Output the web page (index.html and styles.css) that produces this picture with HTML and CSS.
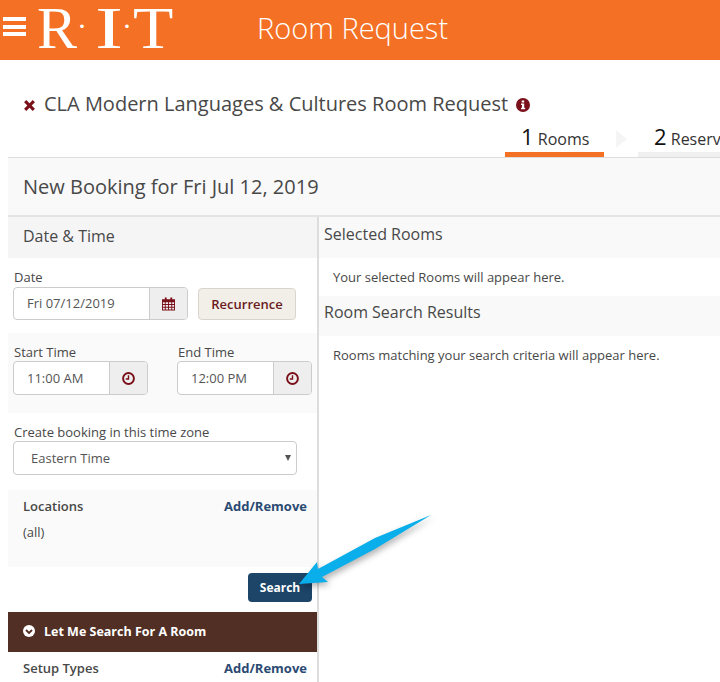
FILE: index.html
```html
<!DOCTYPE html>
<html>
	<head>
		<meta http-equiv="Content-Type" content="text/html; charset=utf-8"/>
		<title>Room Request</title>
		<link rel="stylesheet" href="styles.css">
	</head>
	<body>
	<div class="topbar">
		<div class="burger"><span></span><span></span><span></span></div>
		<div class="logo"><span class="ltr">R</span><span class="dot">·</span><span class="ltr ltrI">I</span><span class="dot">·</span><span class="ltr ltrT">T</span></div>
		<div class="appName">Room Request</div>
	</div>
	<div class="page">
		<div class="titleRow">
			<svg class="icoX" viewBox="0 0 12 12"><path d="M1 3 3 1 6 4 9 1 11 3 8 6 11 9 9 11 6 8 3 11 1 9 4 6Z"/></svg>
			<span class="titleText">CLA Modern Languages &amp; Cultures Room Request</span>
			<svg class="icoInfo" viewBox="0 0 14 14"><circle cx="7" cy="7" r="7"/><path fill="#fff" d="M5.7 2.4h2.5v2H5.700zM5 5.500h3.200v4.200h1v1.600H5V9.700h1V7.100H5z"/></svg>
		</div>
		<div class="steps">
			<div class="step on"><b>1</b> Rooms</div>
			<svg class="stepArrow" viewBox="0 0 11 18"><path d="M0 0 11 9 0 18Z"/></svg>
			<div class="step stepNext"><b>2</b> Reservation Details</div>
		</div>
		<div class="bookingHead">New Booking for Fri Jul 12, 2019</div>
		<div class="cols">
			<div class="leftCol">
				<div class="secHead">Date &amp; Time</div>
				<div class="dateBlock">
					<label>Date</label>
					<div class="dateRow">
						<div class="inputGroup dateInput">
							<span class="val">Fri 07/12/2019</span>
							<span class="addon">
								<svg class="icoCal" viewBox="0 0 14 14"><path fill-rule="evenodd" d="M3 0h2v2h4V0h2v2h3v12H0V2h3zM1 5v2h2V5zm3 0v2h2.500V5zm3.500 0v2H10V5zM11 5v2h2V5zM1 8v2h2V8zm3 0v2h2.500V8zm3.500 0v2H10V8zM11 8v2h2V8zM1 11v2h2v-2zm3 0v2h2.500v-2zm3.500 0v2H10v-2zm3.500 0v2h2v-2z"/></svg>
							</span>
						</div>
						<button class="btnRecur" type="button">Recurrence</button>
					</div>
				</div>
				<div class="timeBlock">
					<div class="timeField">
						<label>Start Time</label>
						<div class="inputGroup timeInput">
							<span class="val">11:00 AM</span>
							<span class="addon"><svg class="icoClock" viewBox="0 0 12 12"><circle cx="6" cy="6" r="5" fill="none" stroke-width="1.800"/><path d="M6 3v3.500H3.500" fill="none" stroke-width="1.300"/></svg></span>
						</div>
					</div>
					<div class="timeField">
						<label>End Time</label>
						<div class="inputGroup timeInput">
							<span class="val">12:00 PM</span>
							<span class="addon"><svg class="icoClock" viewBox="0 0 12 12"><circle cx="6" cy="6" r="5" fill="none" stroke-width="1.800"/><path d="M6 3v3.500H3.500" fill="none" stroke-width="1.300"/></svg></span>
						</div>
					</div>
				</div>
				<div class="zoneBlock">
					<label>Create booking in this time zone</label>
					<div class="selectBox"><span>Eastern Time</span><i class="caret"></i></div>
				</div>
				<div class="locBlock">
					<div class="rowHead"><strong>Locations</strong><a href="#">Add/Remove</a></div>
					<div class="allText">(all)</div>
				</div>
				<div class="searchRow"><button class="btnSearch" type="button">Search</button></div>
				<div class="brownBar">
					<svg class="icoDown" viewBox="0 0 12 12"><circle cx="6" cy="6" r="6" fill="#fff"/><path d="M3 5 6 8 9 5" fill="none" stroke="#512f25" stroke-width="1.800"/></svg>
					Let Me Search For A Room
				</div>
				<div class="rowHead setupRow"><strong>Setup Types</strong><a href="#">Add/Remove</a></div>
			</div>
			<div class="rightCol">
				<div class="resHead">Selected Rooms</div>
				<div class="resText">Your selected Rooms will appear here.</div>
				<div class="resHead resHead2">Room Search Results</div>
				<div class="resText">Rooms matching your search criteria will appear here.</div>
			</div>
		</div>
	</div>
	<svg class="callout" width="720" height="682" viewBox="0 0 720 682"><path d="M431 515 375 538 318 569 317 562 299 584 328 582 322 577 375 549Z"/></svg>
	</body>
</html>
```

FILE: styles.css
```css
html,body{margin:0; padding:0; height:682px; overflow:hidden; background:#fff;}
body{font-family:"Open Sans","Noto Sans",sans-serif; font-size:13px; color:#484848; position:relative;}
label{display:block; line-height:18px; padding-left:1px;}

.topbar{height:60px; background:#f47024; display:flex; align-items:center; color:#fff;}
.burger{width:23px; margin-left:3px; margin-top:-7px; display:flex; flex-direction:column; gap:3.500px;}
.burger span{display:block; height:4px; background:#fff;}
.logo{font-family:"Liberation Serif",serif; font-size:60px; line-height:56px; height:56px; align-self:flex-start; margin-left:11px; width:220px; display:flex; color:#fff;}
.ltr{display:block;}
.ltrI{width:26px; margin-left:9px; text-align:center; transform:scaleX(1.4);}
.ltrT{margin-left:1px; transform:scaleX(1.1); transform-origin:left center;}
.dot{font-size:30px; line-height:51px; width:10px; text-align:center;}
.appName{font-size:29px; font-weight:300; margin-top:-6px;}

.page{padding-left:8px; width:712px; overflow:hidden;}
.titleRow{height:50px; padding:19px 0 0 15px; display:flex; align-items:center;}
.icoX{width:13px; height:13px; fill:#7a1019; margin-top:3px;}
.titleText{font-size:20px; margin-left:8px; white-space:nowrap; line-height:30px;}
.icoInfo{width:14px; height:14px; fill:#7a1019; margin-left:8px; margin-top:1px;}

.steps{height:29px; display:flex; margin-top:-1px; padding-left:497px; white-space:nowrap;}
.step{flex:none; font-size:16px; height:24px; padding:0 0 0 16px; line-height:17px; border-bottom:5px solid #f0f0f0; color:#333; width:83px;}
.step b{font-size:22px; font-weight:400; color:#111;}
.step.on{border-bottom-color:#f47024;}
.stepNext{width:200px;}
.stepArrow{width:11px; height:18px; fill:#f5f5f5; margin:2px 11px 0 12px; flex:none;}

.bookingHead{height:57px; line-height:57px; padding-left:15px; font-size:20px; background:#f9f9f9; border-top:1px solid #ddd; border-bottom:2px solid #e4e4e4;}

.cols{display:flex;}
.leftCol{width:309px; height:465px; flex:none; border-right:2px solid #ddd;}
.secHead{height:41px; line-height:38px; padding-left:15px; font-size:16px; background:#f5f5f5;}
.dateBlock{height:75px; padding:10px 0 0 5px; box-sizing:border-box;}
.dateRow{display:flex; align-items:flex-end; gap:10px; margin-top:1px;}

.inputGroup{display:flex; height:34px; box-sizing:border-box; border:1px solid #ccc; border-radius:4px; background:#fff; overflow:hidden;}
.val{flex:1; line-height:32px; padding-left:13px; color:#555;}
.addon{width:37px; flex:none; background:#eee; border-left:1px solid #ccc; display:flex; align-items:center; justify-content:center;}
.dateInput{width:175px; height:33px;}
.dateInput .val{line-height:31px;}
.timeInput{width:135px;}
.icoCal{width:13px; height:14px; fill:#7a1019;}
.icoClock{width:13px; height:13px; stroke:#7a1019;}

.btnRecur{width:98px; height:32px; padding:0; font:600 13px "Open Sans",sans-serif; color:#6b1a1e; background:#f2efe9; border:1px solid #d8d5cf; border-radius:4px;}

.timeBlock{height:80px; background:#fafafa; padding:10px 0 0 5px; box-sizing:border-box; display:flex; gap:29px;}
.zoneBlock{height:77px; padding:10px 0 0 5px; box-sizing:border-box;}
.selectBox{width:284px; height:34px; box-sizing:border-box; border:1px solid #ccc; border-radius:4px; padding-left:17px; line-height:32px; position:relative; color:#555;}
.caret{position:absolute; right:5px; top:13px; border-left:3px solid transparent; border-right:3px solid transparent; border-top:6px solid #555;}

.locBlock{height:77px; background:#fafafa; padding:6px 10px 0 15px; box-sizing:border-box;}
.rowHead{display:flex; justify-content:space-between; line-height:20px;}
.rowHead strong{font-weight:600;}
.rowHead a{font-weight:700; color:#2b4a73; text-decoration:none;}
.allText{margin-top:6px; line-height:20px;}

.searchRow{height:45px; padding:6px 5px 0 0; box-sizing:border-box; display:flex; justify-content:flex-end; align-items:flex-start;}
.btnSearch{width:64px; height:29px; padding:0; border:0; border-radius:4px; background:#1c4568; color:#fff; font:700 12px "Open Sans",sans-serif;}
.brownBar{height:38px; padding-bottom:2px; background:#512f25; color:#fff; font-weight:700; font-size:12.500px; display:flex; align-items:center; padding-left:15px;}
.icoDown{width:12px; height:12px; margin-right:9px;}
.setupRow{padding:6px 10px 0 15px;}

.rightCol{flex:1; min-width:0;}
.resHead{height:41px; line-height:34px; padding-left:5px; font-size:16px; background:#f9f9f9;}
.resHead2{height:40px; line-height:32px;}
.resText{height:38px; line-height:38px; padding-left:14px;}

.callout{position:absolute; left:0; top:0; pointer-events:none; fill:#0aaeea; filter:drop-shadow(2px 3px 3px rgba(0,0,0,.3));}
```
